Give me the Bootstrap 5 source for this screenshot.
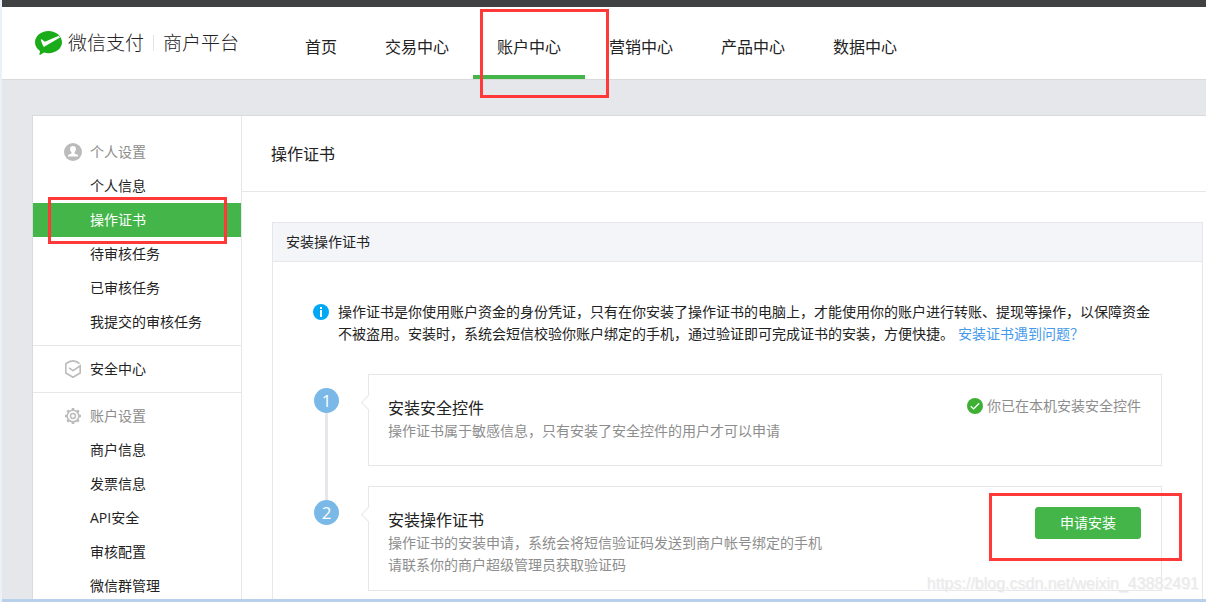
<!DOCTYPE html>
<html lang="zh-CN">
<head>
<meta charset="utf-8">
<meta name="viewport" content="width=device-width, initial-scale=1">
<title>微信支付 商户平台</title>
<link rel="stylesheet" href="https://cdn.jsdelivr.net/npm/bootstrap@5.3.0/dist/css/bootstrap.min.css">
<style>
  :root { --green: #44b549; --line: #e7e7eb; --edge: #d9dadc; --hint: #8d8d8d; --red: #ff3838; }
  body { font-family: "Open Sans", "Noto Sans CJK SC", sans-serif; font-size: 14px; line-height: 22px; color: #222; background: #e6e7eb; border-left: 2px solid #eaf1f9; }
  a { text-decoration: none; }
  .topbar { height: 7px; background: #3f4142; }
  .site-head { height: 73px; padding-left: 33px; background: #fff; border-bottom: 1px solid var(--edge); }
  .brand { width: 246px; font-size: 19px; font-weight: 300; line-height: 24px; color: #222; }
  .brand svg { margin-right: 6px; }
  .brand .rule { width: 1px; height: 16px; background: #e3e3e3; margin: 0 9px; }
  .main-nav { font-size: 16px; line-height: 24px; }
  .main-nav a { color: #222; padding: 12px 24px 0; border-bottom: 4px solid transparent; }
  .main-nav a.active { border-color: var(--green); }
  .callout-box { position: absolute; border: 3px solid var(--red); pointer-events: none; z-index: 3; }
  .mark-nav { left: 7px; right: -24px; top: 2px; bottom: -23px; }
  .mark-side { left: 15px; right: 14px; top: -6px; bottom: -7px; }
  .mark-btn { left: -46px; right: -41px; top: -14px; bottom: -22px; }
  .page-wrap { padding: 35px 0 0 30px; }
  .sheet { background: #fff; border: 1px solid var(--edge); border-width: 1px 0 0 1px; }
  .side { width: 209px; padding-top: 13px; border-right: 1px solid var(--line); }
  .side-group { padding: 6px 0; }
  .side-group + .side-group { border-top: 1px solid var(--line); }
  .side-row { height: 34px; padding-left: 57px; color: #222; }
  .side-row.with-icon { padding-left: 30px; }
  .side-row svg { width: 20px; height: 20px; margin-right: 7px; }
  .side-row.group-title { color: var(--hint); }
  .side-row.active { background: var(--green); color: #fff; }
  .page-title { font-size: 16px; line-height: 24px; padding: 26px 29px 25px; margin: 0; font-weight: 400; border-bottom: 1px solid var(--line); }
  .panel { margin: 30px 3px 0 30px; border: 1px solid var(--line); }
  .panel-title { font-size: 14px; line-height: 22px; font-weight: 400; margin: 0; padding: 8px 13px; background: #f4f5f9; border-bottom: 1px solid var(--line); }
  .panel-body { padding: 39px 40px 0; }
  .panel-body a { color: #459ae9; margin-left: 4px; }
  .info-icon { width: 16px; height: 16px; margin: 3px 9px 0 0; }
  .steps { margin-top: 29px; }
  .step { padding-bottom: 20px; }
  .step-side { width: 26px; margin: 14px 28px -14px 1px; }
  .step-num { width: 25px; height: 25px; border-radius: 50%; background: #7ab8e8; color: #fff; font-size: 17px; line-height: 25px; text-align: center; }
  .step-line { width: 3px; margin: 0 0 -20px 11px; background: var(--line); }
  .step-box { min-height: 92px; border: 1px solid var(--line); padding: 21px 20px 14px 19px; }
  .step-box::before { content: ""; position: absolute; left: -6px; top: 22px; width: 11px; height: 11px; background: #fff; border: 1px solid var(--line); border-width: 0 0 1px 1px; transform: rotate(45deg); }
  .step-box h3 { font-size: 16px; line-height: 24px; font-weight: 400; margin: 0; }
  .step-box p { margin: 0; color: var(--hint); }
  .state svg { width: 16px; height: 16px; margin-right: 4px; }
  .state { color: var(--hint); height: 22px; margin-top: -1px; }
  .btn-apply { --bs-btn-color: #fff; --bs-btn-bg: #44b549; --bs-btn-border-color: #44b549; --bs-btn-hover-color: #fff; --bs-btn-hover-bg: #2f9833; width: 106px; height: 32px; padding: 0; font-size: 14px; line-height: 22px; border-radius: 3px; }
  .apply { height: 32px; margin-top: -1px; }
  .bottom-edge { height: 3px; background: #b9d0ed; }
  .watermark { position: absolute; right: 7px; bottom: 7px; font: 16px/22px "Liberation Sans", sans-serif; color: #e9e9e9; text-shadow: 1px 1px 0 #f6f6f6; pointer-events: none; }
</style>
</head>
<body class="d-flex flex-column vh-100 overflow-hidden position-relative">
<div class="topbar flex-shrink-0"></div>
<header class="site-head d-flex flex-shrink-0">
  <a href="#" class="brand d-flex align-items-center flex-shrink-0">
    <svg width="27" height="24" viewBox="0 0 27 24" aria-hidden="true">
      <path fill="#1aad19" d="M13.500 0C6 0 0 5 0 11.300c0 3.700 2 6.800 5 8.700l-.6 3.600c0 .4.3.5.6.3l4-2.400c1.400.4 2.900.7 4.500.7C21 22.200 27 17.500 27 11.300S21 0 13.500 0z"/>
      <path fill="#fff" d="M6.300 8.300c-.5.300-.6.600-.4 1.200l2.200 5.600c.3.700.9.800 1.500.4L25 6.500 23.800 4.800 10.500 10.600c-.4.200-.7.100-1-.1L7 8.400z"/>
    </svg>
    <span>微信支付</span><span class="rule"></span><span>商户平台</span>
  </a>
  <nav class="main-nav d-flex flex-nowrap text-nowrap">
    <a href="#" class="d-flex align-items-center">首页</a>
    <a href="#" class="d-flex align-items-center">交易中心</a>
    <a href="#" class="d-flex align-items-center position-relative active" aria-current="page">账户中心<span class="callout-box mark-nav"></span></a>
    <a href="#" class="d-flex align-items-center">营销中心</a>
    <a href="#" class="d-flex align-items-center">产品中心</a>
    <a href="#" class="d-flex align-items-center">数据中心</a>
  </nav>
</header>

<div class="page-wrap d-flex flex-grow-1 overflow-hidden">
  <div class="sheet d-flex flex-grow-1">
    <aside class="side flex-shrink-0">
      <div class="side-group">
        <div class="side-row with-icon group-title d-flex align-items-center">
          <svg viewBox="0 0 20 20" aria-hidden="true"><circle cx="10" cy="10" r="9" fill="#bbb"/><path fill="#fff" d="M10 4c-1.900 0-3 1.300-3 3.100 0 1.400.6 2.500 1.500 3.200v1.300L5 12.900V14.600h10v-1.700l-3.500-1.300v-1.300c.9-.7 1.500-1.800 1.500-3.200C13 5.300 11.900 4 10 4z"/></svg>个人设置
        </div>
        <a href="#" class="side-row d-flex align-items-center">个人信息</a>
        <a href="#" class="side-row d-flex align-items-center position-relative active" aria-current="page">操作证书<span class="callout-box mark-side"></span></a>
        <a href="#" class="side-row d-flex align-items-center">待审核任务</a>
        <a href="#" class="side-row d-flex align-items-center">已审核任务</a>
        <a href="#" class="side-row d-flex align-items-center">我提交的审核任务</a>
      </div>
      <div class="side-group">
        <a href="#" class="side-row with-icon d-flex align-items-center">
          <svg viewBox="0 0 20 20" fill="none" stroke="#bbb" stroke-width="1.600" aria-hidden="true"><path d="M16.500 4.700C14.500 2.900 12 1.900 10 1.900S5 3 2.800 4.900V14l7.200 4.200 7.200-4.200V6.800L10.800 11.200c-.5.300-1 .3-1.500 0L6 8.800"/></svg>安全中心
        </a>
      </div>
      <div class="side-group">
        <div class="side-row with-icon group-title d-flex align-items-center">
          <svg viewBox="0 0 20 20" fill="none" stroke="#bbb" aria-hidden="true"><circle cx="10" cy="10" r="5.800" stroke-width="1.500"/><circle cx="10" cy="10" r="2.500" stroke-width="1.400"/><path stroke-width="2.600" d="M10 2v2.500M10 15.500V18M2 10h2.500M15.500 10H18M4.300 4.300l1.800 1.800M13.900 13.900l1.800 1.800M4.300 15.700l1.800-1.800M13.900 6.100l1.800-1.800"/></svg>账户设置
        </div>
        <a href="#" class="side-row d-flex align-items-center">商户信息</a>
        <a href="#" class="side-row d-flex align-items-center">发票信息</a>
        <a href="#" class="side-row d-flex align-items-center">API安全</a>
        <a href="#" class="side-row d-flex align-items-center">审核配置</a>
        <a href="#" class="side-row d-flex align-items-center">微信群管理</a>
      </div>
    </aside>

    <main class="flex-grow-1">
      <h1 class="page-title">操作证书</h1>
      <section class="panel">
        <h2 class="panel-title">安装操作证书</h2>
        <div class="panel-body">
          <div class="d-flex">
            <svg class="info-icon flex-shrink-0" viewBox="0 0 16 16" aria-hidden="true"><circle cx="8" cy="8" r="8" fill="#00a8f3"/><path fill="#fff" d="M7 3h2v2H7zM7 6h2v7H7z"/></svg>
            <p class="mb-0">操作证书是你使用账户资金的身份凭证，只有在你安装了操作证书的电脑上，才能使用你的账户进行转账、提现等操作，以保障资金不被盗用。安装时，系统会短信校验你账户绑定的手机，通过验证即可完成证书的安装，方便快捷。<a href="#">安装证书遇到问题？</a></p>
          </div>
          <div class="steps">
            <div class="step d-flex">
              <div class="step-side d-flex flex-column flex-shrink-0">
                <div class="step-num">1</div>
                <div class="step-line flex-grow-1"></div>
              </div>
              <div class="step-box position-relative d-flex justify-content-between flex-grow-1">
                <div>
                  <h3>安装安全控件</h3>
                  <p>操作证书属于敏感信息，只有安装了安全控件的用户才可以申请</p>
                </div>
                <div class="state d-flex align-items-center flex-shrink-0">
                  <svg viewBox="0 0 16 16" aria-hidden="true"><circle cx="8" cy="8" r="8" fill="#3eb135"/><path fill="none" stroke="#fff" stroke-width="1.300" d="M3.800 8.200l2.800 2.700 5.600-5.600"/></svg>你已在本机安装安全控件
                </div>
              </div>
            </div>
            <div class="step d-flex">
              <div class="step-side flex-shrink-0"><div class="step-num">2</div></div>
              <div class="step-box position-relative d-flex justify-content-between flex-grow-1">
                <div>
                  <h3>安装操作证书</h3>
                  <p>操作证书的安装申请，系统会将短信验证码发送到商户帐号绑定的手机<br>请联系你的商户超级管理员获取验证码</p>
                </div>
                <div class="apply position-relative flex-shrink-0">
                  <button type="button" class="btn btn-apply d-block">申请安装</button>
                  <span class="callout-box mark-btn"></span>
                </div>
              </div>
            </div>
          </div>
        </div>
      </section>
    </main>
  </div>
</div>
<div class="bottom-edge flex-shrink-0"></div>
<div class="watermark">https://blog.csdn.net/weixin_43882491</div>
<script src="https://cdn.jsdelivr.net/npm/bootstrap@5.3.0/dist/js/bootstrap.bundle.min.js"></script>
</body>
</html>
